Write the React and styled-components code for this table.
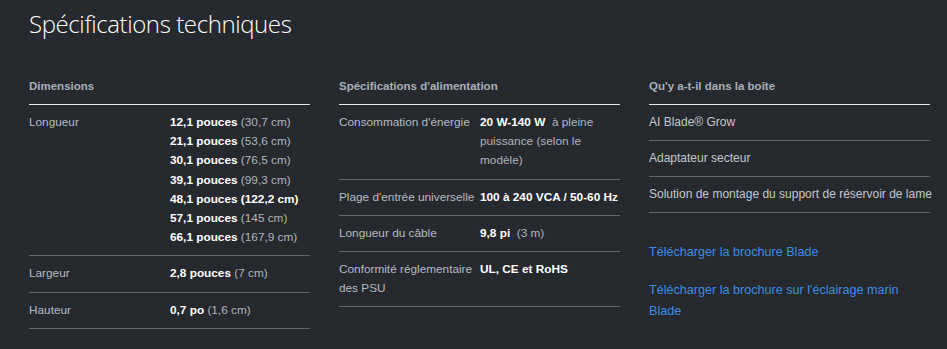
import styled, { createGlobalStyle } from "styled-components";

const GlobalStyle = createGlobalStyle`
  html, body {
    margin: 0;
    padding: 0;
    background: #26292e;
  }
  body {
    font-family: "Liberation Sans", Arial, sans-serif;
    -webkit-font-smoothing: antialiased;
  }
`;

const dimensions = [
  {
    label: "Longueur",
    values: [
      ["12,1 pouces", "(30,7 cm)"],
      ["21,1 pouces", "(53,6 cm)"],
      ["30,1 pouces", "(76,5 cm)"],
      ["39,1 pouces", "(99,3 cm)"],
      ["48,1 pouces (122,2 cm)", ""],
      ["57,1 pouces", "(145 cm)"],
      ["66,1 pouces", "(167,9 cm)"],
    ],
  },
  { label: "Largeur", values: [["2,8 pouces", "(7 cm)"]] },
  { label: "Hauteur", values: [["0,7 po", "(1,6 cm)"]] },
];

const power = [
  {
    label: "Consommation d'énergie",
    values: [["20 W-140 W", "\u00a0à pleine puissance (selon le modèle)"]],
  },
  {
    label: "Plage d'entrée universelle",
    values: [["100 à 240 VCA / 50-60 Hz", ""]],
  },
  { label: "Longueur du câble", values: [["9,8 pi", "\u00a0(3 m)"]] },
  {
    label: "Conformité réglementaire des PSU",
    values: [["UL, CE et RoHS", ""]],
  },
];

const inBox = [
  "AI Blade® Grow",
  "Adaptateur secteur",
  "Solution de montage du support de réservoir de lame",
];

const links = [
  "Télécharger la brochure Blade",
  "Télécharger la brochure sur l'éclairage marin Blade",
];

const SpecTable = ({ title, rows }) => (
  <Column>
    <ColumnTitle>{title}</ColumnTitle>
    {rows.map(({ label, values }) => (
      <Row key={label}>
        <Label>{label}</Label>
        <Values>
          {values.map(([strong, rest]) => (
            <Value key={strong}>
              <strong>{strong}</strong> {rest}
            </Value>
          ))}
        </Values>
      </Row>
    ))}
  </Column>
);

const App = () => {
  return (
    <Page>
      <GlobalStyle />
      <Title>Spécifications techniques</Title>
      <Columns>
        <SpecTable title="Dimensions" rows={dimensions} />
        <SpecTable title="Spécifications d'alimentation" rows={power} />
        <Column>
          <ColumnTitle>Qu'y a-t-il dans la boîte</ColumnTitle>
          {inBox.map((item) => (
            <Item key={item}>{item}</Item>
          ))}
          <Links>
            {links.map((link) => (
              <DownloadLink key={link} href="#">
                {link}
              </DownloadLink>
            ))}
          </Links>
        </Column>
      </Columns>
    </Page>
  );
};

export default App;

const Page = styled.div`
  padding: 8px 16px 0 29px;
  height: 349px;
  box-sizing: border-box;
  overflow: hidden;
`;

const Title = styled.h1`
  margin: 0;
  font-family: "Open Sans", sans-serif;
  font-weight: 300;
  font-size: 24px;
  line-height: 32px;
  color: #fff;
  letter-spacing: -0.4px;
`;

const Columns = styled.div`
  display: grid;
  grid-template-columns: repeat(3, 281px);
  column-gap: 29px;
  margin-top: 39px;
`;

const Column = styled.div`
  display: flex;
  flex-direction: column;
`;

const ColumnTitle = styled.div`
  font-size: 11.5px;
  font-weight: 700;
  color: #a9b0b9;
  line-height: 14px;
  padding-bottom: 11px;
  border-bottom: 1px solid #e4e6e9;
`;

const Row = styled.div`
  display: grid;
  grid-template-columns: 141px 1fr;
  padding: 8px 0 8px;
  border-bottom: 1px solid #62666c;
  font-size: 11.8px;
  line-height: 19.2px;
`;

const Label = styled.div`
  color: #b7bcc3;
`;

const Values = styled.div`
  color: #b0b6bd;

  strong {
    color: #fff;
    font-weight: 700;
  }
`;

const Value = styled.div``;

const Item = styled.div`
  padding: 8px 0 8px;
  border-bottom: 1px solid #62666c;
  font-size: 12px;
  line-height: 19px;
  color: #c3c8ce;
  white-space: nowrap;
`;

const Links = styled.div`
  display: flex;
  flex-direction: column;
  gap: 17px;
  padding-top: 29px;
`;

const DownloadLink = styled.a`
  font-size: 12.6px;
  line-height: 21px;
  color: #3b8ee3;
  text-decoration: none;
`;
